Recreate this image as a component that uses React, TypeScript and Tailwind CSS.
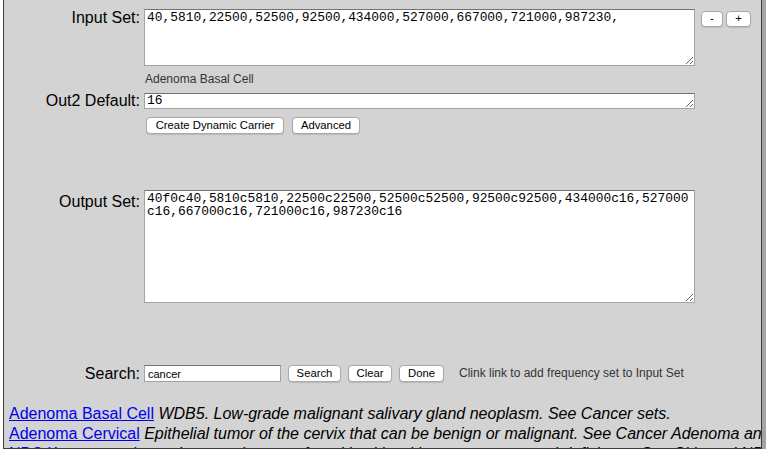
type BtnProps = { children: React.ReactNode; size: string };

function Btn({ children, size }: BtnProps) {
  return (
    <button
      className={`${size} shrink-0 rounded-[4px] border border-[#a9a9a9] bg-white text-center text-[11.3px] leading-none text-black shadow-[0_1px_1px_rgba(0,0,0,0.12)]`}
    >
      {children}
    </button>
  );
}

const area =
  "shrink-0 resize border border-[#a3a3a3] border-t-[#727272] bg-white px-[2px] font-['Liberation_Mono',monospace] text-[12.9px] text-black outline-none";

const results = [
  {
    name: "Adenoma Basal Cell",
    text: "WDB5. Low-grade malignant salivary gland neoplasm. See Cancer sets.",
  },
  {
    name: "Adenoma Cervical",
    text: "Epithelial tumor of the cervix that can be benign or malignant. See Cancer Adenoma and Cervical sets.",
  },
  {
    name: "NBC Keratoacanthoma",
    text: "Low-grade tumor found in skin with sun exposure and deficiency. See Skin and NBC sets.",
  },
];

export default function App() {
  return (
    <div className="min-h-screen bg-white font-['Liberation_Sans',Arial,sans-serif] text-black">
      <div className="-mt-[10px] ml-[3px] h-[459px] w-[759px] overflow-hidden border-x border-b border-[#3c3c3c] bg-[#d3d3d3] pt-[19px] shadow-[4px_4px_0_#a4a4a4]">
        {/* Input Set */}
        <div className="flex items-start">
          <label className="w-[136px] shrink-0 text-right text-[16px] leading-[18px]">Input Set:</label>
          <textarea
            className={`${area} ml-[4px] h-[57px] w-[551px] pt-[1px] leading-[13px]`}
            defaultValue="40,5810,22500,52500,92500,434000,527000,667000,721000,987230,"
          />
          <div className="ml-[6px] mt-[2px] flex gap-[3px]">
            <Btn size="h-[16px] w-[22px]">-</Btn>
            <Btn size="h-[16px] w-[25px]">+</Btn>
          </div>
        </div>

        <p className="ml-[141px] mt-[6px] text-[12px] leading-[14px] text-[#333]">Adenoma Basal Cell</p>

        {/* Out2 Default */}
        <div className="mt-[6px] flex items-center">
          <label className="w-[136px] shrink-0 text-right text-[16px] leading-[18px]">Out2 Default:</label>
          <textarea
            className={`${area} ml-[4px] h-[16px] w-[551px] overflow-hidden pt-[2px] leading-[10px]`}
            defaultValue="16"
          />
        </div>

        <div className="ml-[142px] mt-[7px] flex gap-[8px]">
          <Btn size="h-[17px] w-[138px]">Create Dynamic Carrier</Btn>
          <Btn size="h-[17px] w-[68px]">Advanced</Btn>
        </div>

        {/* Output Set */}
        <div className="mt-[56px] flex items-start">
          <label className="w-[136px] shrink-0 pt-[3px] text-right text-[16px] leading-[18px]">Output Set:</label>
          <textarea
            className={`${area} ml-[4px] h-[113px] w-[551px] pt-[1px] leading-[13px]`}
            defaultValue="40f0c40,5810c5810,22500c22500,52500c52500,92500c92500,434000c16,527000c16,667000c16,721000c16,987230c16"
          />
        </div>

        {/* Search */}
        <div className="mt-[62px] flex items-start">
          <label className="w-[136px] shrink-0 text-right text-[16px] leading-[18px]">Search:</label>
          <input
            className="ml-[4px] h-[17px] w-[137px] shrink-0 border border-[#a3a3a3] border-t-[#727272] bg-white px-[3px] text-[11px] text-black outline-none"
            defaultValue="cancer"
          />
          <div className="ml-[7px] flex gap-[7px]">
            <Btn size="h-[17px] w-[53px]">Search</Btn>
            <Btn size="h-[17px] w-[44px]">Clear</Btn>
            <Btn size="h-[17px] w-[45px]">Done</Btn>
          </div>
          <span className="ml-[15px] text-[12px] leading-[17px] text-[#333]">
            Clink link to add frequency set to Input Set
          </span>
        </div>

        {/* Results */}
        <div className="mt-[21px] pl-[5px]">
          {results.map((r) => (
            <div key={r.name} className="whitespace-nowrap text-[16px] leading-[20px]">
              <a href="#" className="text-[#0000ee] underline">
                {r.name}
              </a>{" "}
              <i>{r.text}</i>
            </div>
          ))}
        </div>
      </div>
    </div>
  );
}
